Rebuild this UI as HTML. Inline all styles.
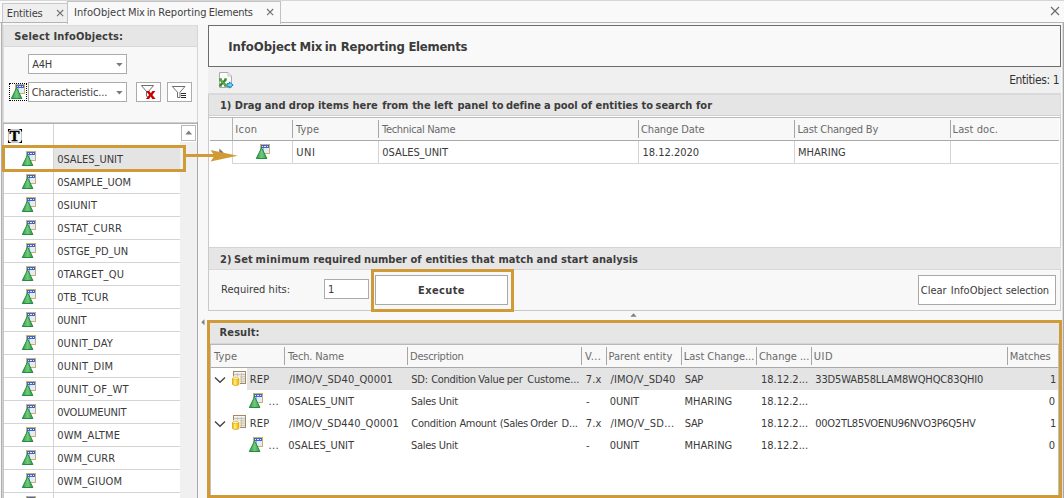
<!DOCTYPE html>
<html lang="en"><head><meta charset="utf-8"><title>InfoObject Mix in Reporting Elements</title>
<style>
html,body{margin:0;padding:0}
html{overflow:hidden;width:1064px;height:498px}
body{width:1064px;height:498px;overflow:hidden;position:relative;background:#f8f8f8;font-family:"DejaVu Sans Condensed","DejaVu Sans","Liberation Sans",sans-serif;font-size:11px}
div,svg,span{position:absolute;box-sizing:content-box}
span{white-space:pre;line-height:20px;height:20px;display:block}
svg{overflow:visible}
#app{left:0;top:0;width:1064px;height:498px;overflow:hidden}
</style></head><body><div id="app">
<div style="left:0px;top:0px;width:1064px;height:23px;background:#f9f9f9;"></div>
<div style="left:0px;top:0px;width:1064px;height:1px;background:#d6d6d6;"></div>
<div style="left:0px;top:22px;width:1064px;height:1px;background:#b4b4b4;"></div>
<div style="left:2px;top:3px;width:65px;height:18px;background:#efefef;border:1px solid #c8c8c8;border-bottom:none;"></div>
<div style="left:67px;top:1px;width:212px;height:22px;background:#f9f9f9;border:1px solid #c2c2c2;border-bottom:none;"></div>
<svg style="left:55.9px;top:9.0px" width="8.2" height="8.2"><path d="M1 1L7.2 7.2M7.2 1L1 7.2" stroke="#707070" stroke-width="1.1" fill="none"/></svg>
<svg style="left:265.9px;top:7.9px" width="8.2" height="8.2"><path d="M1 1L7.2 7.2M7.2 1L1 7.2" stroke="#707070" stroke-width="1.1" fill="none"/></svg>
<svg style="left:1050px;top:6px" width="10" height="10"><path d="M1 1L9 9M9 1L1 9" stroke="#686868" stroke-width="1.1" fill="none"/></svg>
<div style="left:1062px;top:23px;width:1px;height:475px;background:#dedede;"></div>
<div style="left:1063px;top:23px;width:1px;height:475px;background:#a8a8a8;"></div>
<div style="left:1px;top:23px;width:1px;height:475px;background:#b0b0b0;"></div>
<div style="left:2px;top:23px;width:1px;height:475px;background:#d2d2d2;"></div>
<div style="left:3px;top:25px;width:193px;height:473px;background:#f8f8f8;border:1px solid #dcdcdc;border-bottom:none;border-right-color:#d6d6d6;"></div>
<div style="left:4px;top:26px;width:193px;height:20px;background:#e6e6e6;"></div>
<div style="left:4px;top:46px;width:193px;height:1px;background:#d8d8d8;"></div>
<div style="left:28px;top:54px;width:97px;height:18px;background:#ffffff;border:1px solid #ababab;"></div>
<svg style="left:115.8px;top:62.8px" width="8" height="5"><path d="M0.2 0H6.6L3.4 3.5Z" fill="#7a7a7a"/></svg>
<div style="left:28px;top:82px;width:97px;height:18px;background:#ffffff;border:1px solid #ababab;"></div>
<svg style="left:115.8px;top:90.8px" width="8" height="5"><path d="M0.2 0H6.6L3.4 3.5Z" fill="#7a7a7a"/></svg>
<div style="left:9px;top:83px;width:16px;height:16px;background:#ffffff;border:1px dotted #000;"></div>
<svg style="left:11px;top:84px" width="15" height="16" viewBox="0 0 15 16">
<defs><linearGradient id="g1" x1="0" x2="1" y1="0" y2="0"><stop offset="0" stop-color="#2f9a4c"/><stop offset="0.5" stop-color="#74c878"/><stop offset="1" stop-color="#2f9a4c"/></linearGradient></defs>
<rect x="4.5" y="0.5" width="9" height="9" fill="#ffffff" stroke="#c9b06c"/>
<rect x="5" y="1" width="8" height="3" fill="#3f66cf"/>
<rect x="6" y="2" width="1" height="1" fill="#dfe8ff"/><rect x="8" y="2" width="2" height="1" fill="#dfe8ff"/><rect x="11" y="2" width="1" height="1" fill="#dfe8ff"/>
<rect x="7" y="4" width="6" height="5" fill="#e4ebf8"/><rect x="7" y="4" width="1" height="5" fill="#9db4e4"/>
<path d="M5.6 3.8L10.9 14.5H0.3Z" fill="url(#g1)" stroke="#128438" stroke-width="0.9" stroke-linejoin="round"/>
</svg>
<div style="left:136px;top:82px;width:23px;height:18px;background:#ffffff;border:1px solid #ababab;"></div>
<div style="left:167px;top:82px;width:23px;height:18px;background:#ffffff;border:1px solid #ababab;"></div>
<svg style="left:136px;top:82px" width="25" height="20"><path d="M5.4 3.5H17.6L12.6 9.3M10.4 9.3L5.4 3.5M10.5 9V14.2L12 15" fill="none" stroke="#6e6e6e" stroke-width="1"/><path d="M10 9H13.3L14.8 11.3L16.3 9H19.4L16.4 13L19.6 17H16.3L14.7 14.6L13.1 17H9.9L13.1 13Z" fill="#cc0000"/></svg>
<svg style="left:167px;top:82px" width="25" height="20"><path d="M5.3 4.5H18L13 10.2V15.5H10.5V10.2Z" fill="#fff" stroke="#6e6e6e" stroke-width="1"/><path d="M14 11.5H19M14 13.5H19M14 15.5H19" stroke="#2a2a2a" stroke-width="1"/></svg>
<div style="left:3px;top:122px;width:195px;height:1px;background:#cfcfcf;"></div>
<div style="left:3px;top:123px;width:195px;height:1px;background:#b0b0b0;"></div>
<div style="left:197px;top:122px;width:1px;height:376px;background:#a9a9a9;"></div>
<div style="left:4px;top:124px;width:193px;height:374px;background:#ffffff;"></div>
<div style="left:180px;top:142px;width:17px;height:356px;background:#f0f0f0;"></div>
<div style="left:53px;top:124px;width:1px;height:374px;background:#d4d4d4;"></div>
<div style="left:3px;top:124px;width:1px;height:374px;background:#c6c6c6;"></div>
<div style="left:8px;top:129px;width:12px;height:12px;background:#f4f4f4;border:1px solid #c8c8c8;border-radius:2px;"></div>
<svg style="left:8px;top:129px" width="14" height="14"><path d="M0.5 2.5V0.5H2.5M11.5 0.5H13.5V2.5M13.5 11.5V13.5H11.5M2.5 13.5H0.5V11.5" stroke="#000" fill="none" stroke-width="1.1"/></svg>
<div style="left:181px;top:125px;width:13px;height:14px;background:#ffffff;border:1px solid #b8b8b8;"></div>
<svg style="left:185px;top:129.6px" width="8" height="5"><path d="M0.3 4.4H7.1L3.7 0.5Z" fill="#808080"/></svg>
<div style="left:54px;top:147px;width:126px;height:23px;background:#e4e4e4;"></div>
<div style="left:4px;top:170px;width:176px;height:1px;background:#d4d4d4;"></div>
<svg style="left:22px;top:151px" width="15" height="16" viewBox="0 0 15 16">
<defs><linearGradient id="g2" x1="0" x2="1" y1="0" y2="0"><stop offset="0" stop-color="#2f9a4c"/><stop offset="0.5" stop-color="#74c878"/><stop offset="1" stop-color="#2f9a4c"/></linearGradient></defs>
<rect x="4.5" y="0.5" width="9" height="9" fill="#ffffff" stroke="#c9b06c"/>
<rect x="5" y="1" width="8" height="3" fill="#3f66cf"/>
<rect x="6" y="2" width="1" height="1" fill="#dfe8ff"/><rect x="8" y="2" width="2" height="1" fill="#dfe8ff"/><rect x="11" y="2" width="1" height="1" fill="#dfe8ff"/>
<rect x="7" y="4" width="6" height="5" fill="#e4ebf8"/><rect x="7" y="4" width="1" height="5" fill="#9db4e4"/>
<path d="M5.6 3.8L10.9 14.5H0.3Z" fill="url(#g2)" stroke="#128438" stroke-width="0.9" stroke-linejoin="round"/>
</svg>
<div style="left:4px;top:193px;width:176px;height:1px;background:#d4d4d4;"></div>
<svg style="left:22px;top:174px" width="15" height="16" viewBox="0 0 15 16">
<defs><linearGradient id="g3" x1="0" x2="1" y1="0" y2="0"><stop offset="0" stop-color="#2f9a4c"/><stop offset="0.5" stop-color="#74c878"/><stop offset="1" stop-color="#2f9a4c"/></linearGradient></defs>
<rect x="4.5" y="0.5" width="9" height="9" fill="#ffffff" stroke="#c9b06c"/>
<rect x="5" y="1" width="8" height="3" fill="#3f66cf"/>
<rect x="6" y="2" width="1" height="1" fill="#dfe8ff"/><rect x="8" y="2" width="2" height="1" fill="#dfe8ff"/><rect x="11" y="2" width="1" height="1" fill="#dfe8ff"/>
<rect x="7" y="4" width="6" height="5" fill="#e4ebf8"/><rect x="7" y="4" width="1" height="5" fill="#9db4e4"/>
<path d="M5.6 3.8L10.9 14.5H0.3Z" fill="url(#g3)" stroke="#128438" stroke-width="0.9" stroke-linejoin="round"/>
</svg>
<div style="left:4px;top:216px;width:176px;height:1px;background:#d4d4d4;"></div>
<svg style="left:22px;top:197px" width="15" height="16" viewBox="0 0 15 16">
<defs><linearGradient id="g4" x1="0" x2="1" y1="0" y2="0"><stop offset="0" stop-color="#2f9a4c"/><stop offset="0.5" stop-color="#74c878"/><stop offset="1" stop-color="#2f9a4c"/></linearGradient></defs>
<rect x="4.5" y="0.5" width="9" height="9" fill="#ffffff" stroke="#c9b06c"/>
<rect x="5" y="1" width="8" height="3" fill="#3f66cf"/>
<rect x="6" y="2" width="1" height="1" fill="#dfe8ff"/><rect x="8" y="2" width="2" height="1" fill="#dfe8ff"/><rect x="11" y="2" width="1" height="1" fill="#dfe8ff"/>
<rect x="7" y="4" width="6" height="5" fill="#e4ebf8"/><rect x="7" y="4" width="1" height="5" fill="#9db4e4"/>
<path d="M5.6 3.8L10.9 14.5H0.3Z" fill="url(#g4)" stroke="#128438" stroke-width="0.9" stroke-linejoin="round"/>
</svg>
<div style="left:4px;top:239px;width:176px;height:1px;background:#d4d4d4;"></div>
<svg style="left:22px;top:220px" width="15" height="16" viewBox="0 0 15 16">
<defs><linearGradient id="g5" x1="0" x2="1" y1="0" y2="0"><stop offset="0" stop-color="#2f9a4c"/><stop offset="0.5" stop-color="#74c878"/><stop offset="1" stop-color="#2f9a4c"/></linearGradient></defs>
<rect x="4.5" y="0.5" width="9" height="9" fill="#ffffff" stroke="#c9b06c"/>
<rect x="5" y="1" width="8" height="3" fill="#3f66cf"/>
<rect x="6" y="2" width="1" height="1" fill="#dfe8ff"/><rect x="8" y="2" width="2" height="1" fill="#dfe8ff"/><rect x="11" y="2" width="1" height="1" fill="#dfe8ff"/>
<rect x="7" y="4" width="6" height="5" fill="#e4ebf8"/><rect x="7" y="4" width="1" height="5" fill="#9db4e4"/>
<path d="M5.6 3.8L10.9 14.5H0.3Z" fill="url(#g5)" stroke="#128438" stroke-width="0.9" stroke-linejoin="round"/>
</svg>
<div style="left:4px;top:262px;width:176px;height:1px;background:#d4d4d4;"></div>
<svg style="left:22px;top:243px" width="15" height="16" viewBox="0 0 15 16">
<defs><linearGradient id="g6" x1="0" x2="1" y1="0" y2="0"><stop offset="0" stop-color="#2f9a4c"/><stop offset="0.5" stop-color="#74c878"/><stop offset="1" stop-color="#2f9a4c"/></linearGradient></defs>
<rect x="4.5" y="0.5" width="9" height="9" fill="#ffffff" stroke="#c9b06c"/>
<rect x="5" y="1" width="8" height="3" fill="#3f66cf"/>
<rect x="6" y="2" width="1" height="1" fill="#dfe8ff"/><rect x="8" y="2" width="2" height="1" fill="#dfe8ff"/><rect x="11" y="2" width="1" height="1" fill="#dfe8ff"/>
<rect x="7" y="4" width="6" height="5" fill="#e4ebf8"/><rect x="7" y="4" width="1" height="5" fill="#9db4e4"/>
<path d="M5.6 3.8L10.9 14.5H0.3Z" fill="url(#g6)" stroke="#128438" stroke-width="0.9" stroke-linejoin="round"/>
</svg>
<div style="left:4px;top:285px;width:176px;height:1px;background:#d4d4d4;"></div>
<svg style="left:22px;top:266px" width="15" height="16" viewBox="0 0 15 16">
<defs><linearGradient id="g7" x1="0" x2="1" y1="0" y2="0"><stop offset="0" stop-color="#2f9a4c"/><stop offset="0.5" stop-color="#74c878"/><stop offset="1" stop-color="#2f9a4c"/></linearGradient></defs>
<rect x="4.5" y="0.5" width="9" height="9" fill="#ffffff" stroke="#c9b06c"/>
<rect x="5" y="1" width="8" height="3" fill="#3f66cf"/>
<rect x="6" y="2" width="1" height="1" fill="#dfe8ff"/><rect x="8" y="2" width="2" height="1" fill="#dfe8ff"/><rect x="11" y="2" width="1" height="1" fill="#dfe8ff"/>
<rect x="7" y="4" width="6" height="5" fill="#e4ebf8"/><rect x="7" y="4" width="1" height="5" fill="#9db4e4"/>
<path d="M5.6 3.8L10.9 14.5H0.3Z" fill="url(#g7)" stroke="#128438" stroke-width="0.9" stroke-linejoin="round"/>
</svg>
<div style="left:4px;top:308px;width:176px;height:1px;background:#d4d4d4;"></div>
<svg style="left:22px;top:289px" width="15" height="16" viewBox="0 0 15 16">
<defs><linearGradient id="g8" x1="0" x2="1" y1="0" y2="0"><stop offset="0" stop-color="#2f9a4c"/><stop offset="0.5" stop-color="#74c878"/><stop offset="1" stop-color="#2f9a4c"/></linearGradient></defs>
<rect x="4.5" y="0.5" width="9" height="9" fill="#ffffff" stroke="#c9b06c"/>
<rect x="5" y="1" width="8" height="3" fill="#3f66cf"/>
<rect x="6" y="2" width="1" height="1" fill="#dfe8ff"/><rect x="8" y="2" width="2" height="1" fill="#dfe8ff"/><rect x="11" y="2" width="1" height="1" fill="#dfe8ff"/>
<rect x="7" y="4" width="6" height="5" fill="#e4ebf8"/><rect x="7" y="4" width="1" height="5" fill="#9db4e4"/>
<path d="M5.6 3.8L10.9 14.5H0.3Z" fill="url(#g8)" stroke="#128438" stroke-width="0.9" stroke-linejoin="round"/>
</svg>
<div style="left:4px;top:331px;width:176px;height:1px;background:#d4d4d4;"></div>
<svg style="left:22px;top:312px" width="15" height="16" viewBox="0 0 15 16">
<defs><linearGradient id="g9" x1="0" x2="1" y1="0" y2="0"><stop offset="0" stop-color="#2f9a4c"/><stop offset="0.5" stop-color="#74c878"/><stop offset="1" stop-color="#2f9a4c"/></linearGradient></defs>
<rect x="4.5" y="0.5" width="9" height="9" fill="#ffffff" stroke="#c9b06c"/>
<rect x="5" y="1" width="8" height="3" fill="#3f66cf"/>
<rect x="6" y="2" width="1" height="1" fill="#dfe8ff"/><rect x="8" y="2" width="2" height="1" fill="#dfe8ff"/><rect x="11" y="2" width="1" height="1" fill="#dfe8ff"/>
<rect x="7" y="4" width="6" height="5" fill="#e4ebf8"/><rect x="7" y="4" width="1" height="5" fill="#9db4e4"/>
<path d="M5.6 3.8L10.9 14.5H0.3Z" fill="url(#g9)" stroke="#128438" stroke-width="0.9" stroke-linejoin="round"/>
</svg>
<div style="left:4px;top:354px;width:176px;height:1px;background:#d4d4d4;"></div>
<svg style="left:22px;top:335px" width="15" height="16" viewBox="0 0 15 16">
<defs><linearGradient id="g10" x1="0" x2="1" y1="0" y2="0"><stop offset="0" stop-color="#2f9a4c"/><stop offset="0.5" stop-color="#74c878"/><stop offset="1" stop-color="#2f9a4c"/></linearGradient></defs>
<rect x="4.5" y="0.5" width="9" height="9" fill="#ffffff" stroke="#c9b06c"/>
<rect x="5" y="1" width="8" height="3" fill="#3f66cf"/>
<rect x="6" y="2" width="1" height="1" fill="#dfe8ff"/><rect x="8" y="2" width="2" height="1" fill="#dfe8ff"/><rect x="11" y="2" width="1" height="1" fill="#dfe8ff"/>
<rect x="7" y="4" width="6" height="5" fill="#e4ebf8"/><rect x="7" y="4" width="1" height="5" fill="#9db4e4"/>
<path d="M5.6 3.8L10.9 14.5H0.3Z" fill="url(#g10)" stroke="#128438" stroke-width="0.9" stroke-linejoin="round"/>
</svg>
<div style="left:4px;top:377px;width:176px;height:1px;background:#d4d4d4;"></div>
<svg style="left:22px;top:358px" width="15" height="16" viewBox="0 0 15 16">
<defs><linearGradient id="g11" x1="0" x2="1" y1="0" y2="0"><stop offset="0" stop-color="#2f9a4c"/><stop offset="0.5" stop-color="#74c878"/><stop offset="1" stop-color="#2f9a4c"/></linearGradient></defs>
<rect x="4.5" y="0.5" width="9" height="9" fill="#ffffff" stroke="#c9b06c"/>
<rect x="5" y="1" width="8" height="3" fill="#3f66cf"/>
<rect x="6" y="2" width="1" height="1" fill="#dfe8ff"/><rect x="8" y="2" width="2" height="1" fill="#dfe8ff"/><rect x="11" y="2" width="1" height="1" fill="#dfe8ff"/>
<rect x="7" y="4" width="6" height="5" fill="#e4ebf8"/><rect x="7" y="4" width="1" height="5" fill="#9db4e4"/>
<path d="M5.6 3.8L10.9 14.5H0.3Z" fill="url(#g11)" stroke="#128438" stroke-width="0.9" stroke-linejoin="round"/>
</svg>
<div style="left:4px;top:400px;width:176px;height:1px;background:#d4d4d4;"></div>
<svg style="left:22px;top:381px" width="15" height="16" viewBox="0 0 15 16">
<defs><linearGradient id="g12" x1="0" x2="1" y1="0" y2="0"><stop offset="0" stop-color="#2f9a4c"/><stop offset="0.5" stop-color="#74c878"/><stop offset="1" stop-color="#2f9a4c"/></linearGradient></defs>
<rect x="4.5" y="0.5" width="9" height="9" fill="#ffffff" stroke="#c9b06c"/>
<rect x="5" y="1" width="8" height="3" fill="#3f66cf"/>
<rect x="6" y="2" width="1" height="1" fill="#dfe8ff"/><rect x="8" y="2" width="2" height="1" fill="#dfe8ff"/><rect x="11" y="2" width="1" height="1" fill="#dfe8ff"/>
<rect x="7" y="4" width="6" height="5" fill="#e4ebf8"/><rect x="7" y="4" width="1" height="5" fill="#9db4e4"/>
<path d="M5.6 3.8L10.9 14.5H0.3Z" fill="url(#g12)" stroke="#128438" stroke-width="0.9" stroke-linejoin="round"/>
</svg>
<div style="left:4px;top:423px;width:176px;height:1px;background:#d4d4d4;"></div>
<svg style="left:22px;top:404px" width="15" height="16" viewBox="0 0 15 16">
<defs><linearGradient id="g13" x1="0" x2="1" y1="0" y2="0"><stop offset="0" stop-color="#2f9a4c"/><stop offset="0.5" stop-color="#74c878"/><stop offset="1" stop-color="#2f9a4c"/></linearGradient></defs>
<rect x="4.5" y="0.5" width="9" height="9" fill="#ffffff" stroke="#c9b06c"/>
<rect x="5" y="1" width="8" height="3" fill="#3f66cf"/>
<rect x="6" y="2" width="1" height="1" fill="#dfe8ff"/><rect x="8" y="2" width="2" height="1" fill="#dfe8ff"/><rect x="11" y="2" width="1" height="1" fill="#dfe8ff"/>
<rect x="7" y="4" width="6" height="5" fill="#e4ebf8"/><rect x="7" y="4" width="1" height="5" fill="#9db4e4"/>
<path d="M5.6 3.8L10.9 14.5H0.3Z" fill="url(#g13)" stroke="#128438" stroke-width="0.9" stroke-linejoin="round"/>
</svg>
<div style="left:4px;top:446px;width:176px;height:1px;background:#d4d4d4;"></div>
<svg style="left:22px;top:427px" width="15" height="16" viewBox="0 0 15 16">
<defs><linearGradient id="g14" x1="0" x2="1" y1="0" y2="0"><stop offset="0" stop-color="#2f9a4c"/><stop offset="0.5" stop-color="#74c878"/><stop offset="1" stop-color="#2f9a4c"/></linearGradient></defs>
<rect x="4.5" y="0.5" width="9" height="9" fill="#ffffff" stroke="#c9b06c"/>
<rect x="5" y="1" width="8" height="3" fill="#3f66cf"/>
<rect x="6" y="2" width="1" height="1" fill="#dfe8ff"/><rect x="8" y="2" width="2" height="1" fill="#dfe8ff"/><rect x="11" y="2" width="1" height="1" fill="#dfe8ff"/>
<rect x="7" y="4" width="6" height="5" fill="#e4ebf8"/><rect x="7" y="4" width="1" height="5" fill="#9db4e4"/>
<path d="M5.6 3.8L10.9 14.5H0.3Z" fill="url(#g14)" stroke="#128438" stroke-width="0.9" stroke-linejoin="round"/>
</svg>
<div style="left:4px;top:469px;width:176px;height:1px;background:#d4d4d4;"></div>
<svg style="left:22px;top:450px" width="15" height="16" viewBox="0 0 15 16">
<defs><linearGradient id="g15" x1="0" x2="1" y1="0" y2="0"><stop offset="0" stop-color="#2f9a4c"/><stop offset="0.5" stop-color="#74c878"/><stop offset="1" stop-color="#2f9a4c"/></linearGradient></defs>
<rect x="4.5" y="0.5" width="9" height="9" fill="#ffffff" stroke="#c9b06c"/>
<rect x="5" y="1" width="8" height="3" fill="#3f66cf"/>
<rect x="6" y="2" width="1" height="1" fill="#dfe8ff"/><rect x="8" y="2" width="2" height="1" fill="#dfe8ff"/><rect x="11" y="2" width="1" height="1" fill="#dfe8ff"/>
<rect x="7" y="4" width="6" height="5" fill="#e4ebf8"/><rect x="7" y="4" width="1" height="5" fill="#9db4e4"/>
<path d="M5.6 3.8L10.9 14.5H0.3Z" fill="url(#g15)" stroke="#128438" stroke-width="0.9" stroke-linejoin="round"/>
</svg>
<div style="left:4px;top:492px;width:176px;height:1px;background:#d4d4d4;"></div>
<svg style="left:22px;top:473px" width="15" height="16" viewBox="0 0 15 16">
<defs><linearGradient id="g16" x1="0" x2="1" y1="0" y2="0"><stop offset="0" stop-color="#2f9a4c"/><stop offset="0.5" stop-color="#74c878"/><stop offset="1" stop-color="#2f9a4c"/></linearGradient></defs>
<rect x="4.5" y="0.5" width="9" height="9" fill="#ffffff" stroke="#c9b06c"/>
<rect x="5" y="1" width="8" height="3" fill="#3f66cf"/>
<rect x="6" y="2" width="1" height="1" fill="#dfe8ff"/><rect x="8" y="2" width="2" height="1" fill="#dfe8ff"/><rect x="11" y="2" width="1" height="1" fill="#dfe8ff"/>
<rect x="7" y="4" width="6" height="5" fill="#e4ebf8"/><rect x="7" y="4" width="1" height="5" fill="#9db4e4"/>
<path d="M5.6 3.8L10.9 14.5H0.3Z" fill="url(#g16)" stroke="#128438" stroke-width="0.9" stroke-linejoin="round"/>
</svg>
<div style="left:4px;top:515px;width:176px;height:1px;background:#d4d4d4;"></div>
<svg style="left:22px;top:496px" width="15" height="16" viewBox="0 0 15 16">
<defs><linearGradient id="g17" x1="0" x2="1" y1="0" y2="0"><stop offset="0" stop-color="#2f9a4c"/><stop offset="0.5" stop-color="#74c878"/><stop offset="1" stop-color="#2f9a4c"/></linearGradient></defs>
<rect x="4.5" y="0.5" width="9" height="9" fill="#ffffff" stroke="#c9b06c"/>
<rect x="5" y="1" width="8" height="3" fill="#3f66cf"/>
<rect x="6" y="2" width="1" height="1" fill="#dfe8ff"/><rect x="8" y="2" width="2" height="1" fill="#dfe8ff"/><rect x="11" y="2" width="1" height="1" fill="#dfe8ff"/>
<rect x="7" y="4" width="6" height="5" fill="#e4ebf8"/><rect x="7" y="4" width="1" height="5" fill="#9db4e4"/>
<path d="M5.6 3.8L10.9 14.5H0.3Z" fill="url(#g17)" stroke="#128438" stroke-width="0.9" stroke-linejoin="round"/>
</svg>
<div style="left:2px;top:145px;width:178px;height:21px;border:3px solid #d09b37;"></div>
<div style="left:208px;top:25px;width:851px;height:40px;background:#f9f9f9;border:1px solid #6c6c6c;"></div>
<div style="left:208px;top:67px;width:853px;height:26px;background:#f0f0f0;"></div>
<svg style="left:218px;top:71px" width="17" height="18" viewBox="0 0 17 18">
<path d="M1.5 1.5H10L13.5 5V16.5H1.5Z" fill="#fbfbfb" stroke="#ababab"/>
<path d="M10 1.5V5H13.5" fill="#f2f2f2" stroke="#c4c4c4"/>
<path d="M1 8H4M6 8H9M1 15H4M6 15H9" stroke="#2f8a1c" stroke-width="1.2"/>
<path d="M1.8 8.2L8.2 14.8M8.2 8.2L1.8 14.8" stroke="#2f8a1c" stroke-width="2.3"/>
<path d="M2 8.4L8 14.6" stroke="#a8e08c" stroke-width="0.7"/>
<path d="M9 12.6H11.4V11L15.2 14L11.4 17V15.4H9Z" fill="#62d8f4" stroke="#1a7cb0" stroke-width="0.9" stroke-linejoin="round"/>
</svg>
<div style="left:208px;top:93px;width:853px;height:2px;background:#d9d9d9;"></div>
<div style="left:208px;top:95px;width:853px;height:20px;background:#e5e5e5;"></div>
<div style="left:1060px;top:95px;width:1px;height:20px;background:#dadada;"></div>
<div style="left:208px;top:115px;width:853px;height:1px;background:#d0d0d0;"></div>
<div style="left:208px;top:95px;width:1px;height:216px;background:#cacaca;"></div>
<div style="left:209px;top:116px;width:851px;height:132px;background:#ffffff;"></div>
<div style="left:1060px;top:116px;width:1px;height:132px;background:#d0d0d0;"></div>
<div style="left:209px;top:117px;width:851px;height:1px;background:#b9b9b9;"></div>
<div style="left:210px;top:118px;width:849px;height:22px;background:#f8f8f8;"></div>
<div style="left:210px;top:140px;width:849px;height:1px;background:#a9a9a9;"></div>
<div style="left:232px;top:163px;width:827px;height:1px;background:#d4d4d4;"></div>
<div style="left:232px;top:118px;width:1px;height:22px;background:#b4b4b4;"></div>
<div style="left:232px;top:141px;width:1px;height:22px;background:#d4d4d4;"></div>
<div style="left:292px;top:120px;width:1px;height:18px;background:#a6a6a6;"></div>
<div style="left:292px;top:141px;width:1px;height:22px;background:#d4d4d4;"></div>
<div style="left:378px;top:120px;width:1px;height:18px;background:#a6a6a6;"></div>
<div style="left:378px;top:141px;width:1px;height:22px;background:#d4d4d4;"></div>
<div style="left:638px;top:120px;width:1px;height:18px;background:#a6a6a6;"></div>
<div style="left:638px;top:141px;width:1px;height:22px;background:#d4d4d4;"></div>
<div style="left:794px;top:120px;width:1px;height:18px;background:#a6a6a6;"></div>
<div style="left:794px;top:141px;width:1px;height:22px;background:#d4d4d4;"></div>
<div style="left:950px;top:120px;width:1px;height:18px;background:#a6a6a6;"></div>
<div style="left:950px;top:141px;width:1px;height:22px;background:#d4d4d4;"></div>
<svg style="left:219px;top:147.5px" width="6" height="9"><path d="M0.3 0.5L4.5 4.5L0.3 8.5Z" fill="#777"/></svg>
<svg style="left:256px;top:144px" width="15" height="16" viewBox="0 0 15 16">
<defs><linearGradient id="g18" x1="0" x2="1" y1="0" y2="0"><stop offset="0" stop-color="#2f9a4c"/><stop offset="0.5" stop-color="#74c878"/><stop offset="1" stop-color="#2f9a4c"/></linearGradient></defs>
<rect x="4.5" y="0.5" width="9" height="9" fill="#ffffff" stroke="#c9b06c"/>
<rect x="5" y="1" width="8" height="3" fill="#3f66cf"/>
<rect x="6" y="2" width="1" height="1" fill="#dfe8ff"/><rect x="8" y="2" width="2" height="1" fill="#dfe8ff"/><rect x="11" y="2" width="1" height="1" fill="#dfe8ff"/>
<rect x="7" y="4" width="6" height="5" fill="#e4ebf8"/><rect x="7" y="4" width="1" height="5" fill="#9db4e4"/>
<path d="M5.6 3.8L10.9 14.5H0.3Z" fill="url(#g18)" stroke="#128438" stroke-width="0.9" stroke-linejoin="round"/>
</svg>
<div style="left:209px;top:247px;width:852px;height:1px;background:#d4d4d4;"></div>
<div style="left:209px;top:248px;width:852px;height:21px;background:#e6e6e6;"></div>
<div style="left:209px;top:269px;width:852px;height:1px;background:#d8d8d8;"></div>
<div style="left:209px;top:310px;width:852px;height:1px;background:#c8c8c8;"></div>
<div style="left:1060px;top:270px;width:1px;height:40px;background:#d0d0d0;"></div>
<div style="left:324px;top:279px;width:43px;height:18px;background:#ffffff;border:1px solid #ababab;"></div>
<div style="left:375px;top:275px;width:131px;height:28px;background:#ffffff;border:1px solid #a8a8a8;"></div>
<div style="left:371px;top:269px;width:137px;height:37px;border:3px solid #d09b37;"></div>
<div style="left:918px;top:275px;width:136px;height:28px;background:#ffffff;border:1px solid #a8a8a8;"></div>
<svg style="left:201px;top:319px" width="4" height="7"><path d="M3.5 0.3V6.3L0.3 3.3Z" fill="#808080"/></svg>
<svg style="left:630px;top:313px" width="7" height="4"><path d="M0.3 3.7H6.7L3.5 0.3Z" fill="#808080"/></svg>
<div style="left:210px;top:323px;width:849px;height:20px;background:#e6e6e6;"></div>
<div style="left:210px;top:343px;width:849px;height:1px;background:#d6d6d6;"></div>
<div style="left:210px;top:344px;width:849px;height:1px;background:#b9b9b9;"></div>
<div style="left:210px;top:345px;width:848px;height:150px;background:#ffffff;"></div>
<div style="left:210px;top:345px;width:1px;height:150px;background:#c0c0c0;"></div>
<div style="left:1058px;top:345px;width:1px;height:150px;background:#c0c0c0;"></div>
<div style="left:211px;top:345px;width:847px;height:22px;background:#f8f8f8;"></div>
<div style="left:211px;top:367px;width:847px;height:1px;background:#a9a9a9;"></div>
<div style="left:247px;top:368px;width:811px;height:22px;background:#e4e4e4;"></div>
<div style="left:284px;top:347px;width:1px;height:18px;background:#a6a6a6;"></div>
<div style="left:407px;top:347px;width:1px;height:18px;background:#a6a6a6;"></div>
<div style="left:581px;top:347px;width:1px;height:18px;background:#a6a6a6;"></div>
<div style="left:606px;top:347px;width:1px;height:18px;background:#a6a6a6;"></div>
<div style="left:681px;top:347px;width:1px;height:18px;background:#a6a6a6;"></div>
<div style="left:756px;top:347px;width:1px;height:18px;background:#a6a6a6;"></div>
<div style="left:811px;top:347px;width:1px;height:18px;background:#a6a6a6;"></div>
<div style="left:1007px;top:347px;width:1px;height:18px;background:#a6a6a6;"></div>
<svg style="left:214px;top:376px" width="12" height="8"><path d="M1 1.5L6 6.2L11 1.5" stroke="#444" stroke-width="1.4" fill="none"/></svg>
<svg style="left:232px;top:370px" width="15" height="17" viewBox="0 0 15 17">
<defs><linearGradient id="c19" x1="0" x2="1" y1="0" y2="0"><stop offset="0" stop-color="#f2b705"/><stop offset="0.35" stop-color="#fff27a"/><stop offset="1" stop-color="#f0b400"/></linearGradient></defs>
<rect x="1.5" y="1.5" width="12" height="12" fill="#dcecfc" stroke="#a8895a"/>
<path d="M2 4.5H13M2 6.8H13M2 9.1H13M2 11.4H13M5.5 2V13M9.5 2V13" stroke="#d2bf9a" stroke-width="0.9"/>
<path d="M2 2.6H13" stroke="#f4f8ff" stroke-width="1"/>
<path d="M-0.2 6.4H8V14H-0.2Z" fill="#ffffff"/>
<path d="M0.6 8.5V14.3C0.6 15.8 6.8 15.8 6.8 14.3V8.5C6.8 7 0.6 7 0.6 8.5Z" fill="url(#c19)" stroke="#d9a21b" stroke-width="0.9"/>
<path d="M0.8 8.7C0.8 10 6.6 10 6.6 8.7" fill="none" stroke="#e0aa20" stroke-width="0.7"/>
<ellipse cx="3.7" cy="8.4" rx="2.6" ry="0.8" fill="#fff6b0"/>
</svg>
<svg style="left:249px;top:393px" width="15" height="16" viewBox="0 0 15 16">
<defs><linearGradient id="g20" x1="0" x2="1" y1="0" y2="0"><stop offset="0" stop-color="#2f9a4c"/><stop offset="0.5" stop-color="#74c878"/><stop offset="1" stop-color="#2f9a4c"/></linearGradient></defs>
<rect x="4.5" y="0.5" width="9" height="9" fill="#ffffff" stroke="#c9b06c"/>
<rect x="5" y="1" width="8" height="3" fill="#3f66cf"/>
<rect x="6" y="2" width="1" height="1" fill="#dfe8ff"/><rect x="8" y="2" width="2" height="1" fill="#dfe8ff"/><rect x="11" y="2" width="1" height="1" fill="#dfe8ff"/>
<rect x="7" y="4" width="6" height="5" fill="#e4ebf8"/><rect x="7" y="4" width="1" height="5" fill="#9db4e4"/>
<path d="M5.6 3.8L10.9 14.5H0.3Z" fill="url(#g20)" stroke="#128438" stroke-width="0.9" stroke-linejoin="round"/>
</svg>
<svg style="left:214px;top:420px" width="12" height="8"><path d="M1 1.5L6 6.2L11 1.5" stroke="#444" stroke-width="1.4" fill="none"/></svg>
<svg style="left:232px;top:414px" width="15" height="17" viewBox="0 0 15 17">
<defs><linearGradient id="c21" x1="0" x2="1" y1="0" y2="0"><stop offset="0" stop-color="#f2b705"/><stop offset="0.35" stop-color="#fff27a"/><stop offset="1" stop-color="#f0b400"/></linearGradient></defs>
<rect x="1.5" y="1.5" width="12" height="12" fill="#dcecfc" stroke="#a8895a"/>
<path d="M2 4.5H13M2 6.8H13M2 9.1H13M2 11.4H13M5.5 2V13M9.5 2V13" stroke="#d2bf9a" stroke-width="0.9"/>
<path d="M2 2.6H13" stroke="#f4f8ff" stroke-width="1"/>
<path d="M-0.2 6.4H8V14H-0.2Z" fill="#ffffff"/>
<path d="M0.6 8.5V14.3C0.6 15.8 6.8 15.8 6.8 14.3V8.5C6.8 7 0.6 7 0.6 8.5Z" fill="url(#c21)" stroke="#d9a21b" stroke-width="0.9"/>
<path d="M0.8 8.7C0.8 10 6.6 10 6.6 8.7" fill="none" stroke="#e0aa20" stroke-width="0.7"/>
<ellipse cx="3.7" cy="8.4" rx="2.6" ry="0.8" fill="#fff6b0"/>
</svg>
<svg style="left:249px;top:437px" width="15" height="16" viewBox="0 0 15 16">
<defs><linearGradient id="g22" x1="0" x2="1" y1="0" y2="0"><stop offset="0" stop-color="#2f9a4c"/><stop offset="0.5" stop-color="#74c878"/><stop offset="1" stop-color="#2f9a4c"/></linearGradient></defs>
<rect x="4.5" y="0.5" width="9" height="9" fill="#ffffff" stroke="#c9b06c"/>
<rect x="5" y="1" width="8" height="3" fill="#3f66cf"/>
<rect x="6" y="2" width="1" height="1" fill="#dfe8ff"/><rect x="8" y="2" width="2" height="1" fill="#dfe8ff"/><rect x="11" y="2" width="1" height="1" fill="#dfe8ff"/>
<rect x="7" y="4" width="6" height="5" fill="#e4ebf8"/><rect x="7" y="4" width="1" height="5" fill="#9db4e4"/>
<path d="M5.6 3.8L10.9 14.5H0.3Z" fill="url(#g22)" stroke="#128438" stroke-width="0.9" stroke-linejoin="round"/>
</svg>
<div style="left:207px;top:320px;width:849px;height:172px;border:3px solid #d09b37;"></div>
<svg style="left:186px;top:148.3px" width="54" height="16"><path d="M0 7.5H30" stroke="#d09b37" stroke-width="3"/><path d="M24.5 2L51.6 7.8L24.5 13.5L28.5 7.7Z" fill="#d09b37"/></svg>
<span style="left:6.85px;top:4.00px;font-size:11px;color:#404040;letter-spacing:-0.160px;">Entities</span>
<span style="left:74.05px;top:3.00px;font-size:11px;color:#404040;letter-spacing:0.069px;">InfoObject </span>
<span style="left:128.05px;top:3.00px;font-size:11px;color:#404040;letter-spacing:-0.142px;">Mix </span>
<span style="left:146.77px;top:3.00px;font-size:11px;color:#404040;letter-spacing:-0.142px;">in </span>
<span style="left:158.35px;top:3.00px;font-size:11px;color:#404040;letter-spacing:0.022px;">Reporting </span>
<span style="left:208.85px;top:3.00px;font-size:11px;color:#404040;letter-spacing:-0.289px;">Elements</span>
<span style="left:14.30px;top:27.00px;font-size:11px;color:#3c3c3c;font-weight:bold;letter-spacing:0.161px;">Select InfoObjects:</span>
<span style="left:32.20px;top:55.00px;font-size:11px;color:#3a3a3a;letter-spacing:-0.256px;">A4H</span>
<span style="left:31.70px;top:83.00px;font-size:11px;color:#3a3a3a;letter-spacing:-0.167px;">Characteristic...</span>
<span style="left:9.57px;top:126.00px;font-size:15px;color:#000;font-weight:bold;font-family:'Liberation Serif',serif;-webkit-text-stroke:0.45px #000;">T</span>
<span style="left:57.15px;top:150.00px;font-size:11px;color:#3a3a3a;letter-spacing:-0.036px;">0SALES_UNIT</span>
<span style="left:57.15px;top:173.00px;font-size:11px;color:#3a3a3a;letter-spacing:-0.045px;">0SAMPLE_UOM</span>
<span style="left:57.15px;top:196.00px;font-size:11px;color:#3a3a3a;letter-spacing:0.115px;">0SIUNIT</span>
<span style="left:57.15px;top:219.00px;font-size:11px;color:#3a3a3a;letter-spacing:0.250px;">0STAT_CURR</span>
<span style="left:57.15px;top:242.00px;font-size:11px;color:#3a3a3a;letter-spacing:0.043px;">0STGE_PD_UN</span>
<span style="left:57.15px;top:265.00px;font-size:11px;color:#3a3a3a;letter-spacing:0.192px;">0TARGET_QU</span>
<span style="left:57.15px;top:288.00px;font-size:11px;color:#3a3a3a;letter-spacing:0.132px;">0TB_TCUR</span>
<span style="left:57.15px;top:311.00px;font-size:11px;color:#3a3a3a;letter-spacing:-0.127px;">0UNIT</span>
<span style="left:57.15px;top:334.00px;font-size:11px;color:#3a3a3a;letter-spacing:0.183px;">0UNIT_DAY</span>
<span style="left:57.15px;top:357.00px;font-size:11px;color:#3a3a3a;letter-spacing:0.258px;">0UNIT_DIM</span>
<span style="left:57.15px;top:380.00px;font-size:11px;color:#3a3a3a;letter-spacing:0.219px;">0UNIT_OF_WT</span>
<span style="left:57.15px;top:403.00px;font-size:11px;color:#3a3a3a;letter-spacing:-0.197px;">0VOLUMEUNIT</span>
<span style="left:57.15px;top:426.00px;font-size:11px;color:#3a3a3a;letter-spacing:0.198px;">0WM_ALTME</span>
<span style="left:57.15px;top:449.00px;font-size:11px;color:#3a3a3a;letter-spacing:0.078px;">0WM_CURR</span>
<span style="left:57.15px;top:472.00px;font-size:11px;color:#3a3a3a;letter-spacing:0.145px;">0WM_GIUOM</span>
<span style="left:228.18px;top:37.00px;font-size:13px;color:#3c3c3c;font-weight:bold;letter-spacing:-0.050px;">InfoObject </span>
<span style="left:299.47px;top:37.00px;font-size:13px;color:#3c3c3c;font-weight:bold;letter-spacing:-0.213px;">Mix </span>
<span style="left:324.64px;top:37.00px;font-size:13px;color:#3c3c3c;font-weight:bold;letter-spacing:-0.213px;">in </span>
<span style="left:340.78px;top:37.00px;font-size:13px;color:#3c3c3c;font-weight:bold;letter-spacing:-0.168px;">Reporting </span>
<span style="left:408.38px;top:37.00px;font-size:13px;color:#3c3c3c;font-weight:bold;letter-spacing:-0.265px;">Elements</span>
<span style="left:1009.15px;top:70.00px;font-size:12px;color:#333;letter-spacing:-0.391px;">Entities: 1</span>
<span style="left:219.97px;top:96.00px;font-size:11px;color:#3c3c3c;font-weight:bold;letter-spacing:-0.017px;">1) </span>
<span style="left:234.79px;top:96.00px;font-size:11px;color:#3c3c3c;font-weight:bold;letter-spacing:-0.017px;">Drag </span>
<span style="left:264.71px;top:96.00px;font-size:11px;color:#3c3c3c;font-weight:bold;letter-spacing:-0.017px;">and </span>
<span style="left:288.82px;top:96.00px;font-size:11px;color:#3c3c3c;font-weight:bold;letter-spacing:-0.017px;">drop </span>
<span style="left:317.99px;top:96.00px;font-size:11px;color:#3c3c3c;font-weight:bold;letter-spacing:-0.017px;">items </span>
<span style="left:352.53px;top:96.00px;font-size:11px;color:#3c3c3c;font-weight:bold;letter-spacing:-0.017px;">here </span>
<span style="left:382.18px;top:96.00px;font-size:11px;color:#3c3c3c;font-weight:bold;letter-spacing:-0.017px;">from </span>
<span style="left:412.15px;top:96.00px;font-size:11px;color:#3c3c3c;font-weight:bold;letter-spacing:-0.017px;">the </span>
<span style="left:433.90px;top:96.00px;font-size:11px;color:#3c3c3c;font-weight:bold;letter-spacing:-0.017px;">left </span>
<span style="left:457.42px;top:96.00px;font-size:11px;color:#3c3c3c;font-weight:bold;letter-spacing:-0.017px;">panel </span>
<span style="left:491.94px;top:96.00px;font-size:11px;color:#3c3c3c;font-weight:bold;letter-spacing:-0.017px;">to </span>
<span style="left:505.90px;top:96.00px;font-size:11px;color:#3c3c3c;font-weight:bold;letter-spacing:-0.046px;">define </span>
<span style="left:543.93px;top:96.00px;font-size:11px;color:#3c3c3c;font-weight:bold;letter-spacing:-0.017px;">a </span>
<span style="left:553.73px;top:96.00px;font-size:11px;color:#3c3c3c;font-weight:bold;letter-spacing:-0.017px;">pool </span>
<span style="left:581.01px;top:96.00px;font-size:11px;color:#3c3c3c;font-weight:bold;letter-spacing:-0.017px;">of </span>
<span style="left:595.50px;top:96.00px;font-size:11px;color:#3c3c3c;font-weight:bold;letter-spacing:0.019px;">entities </span>
<span style="left:641.49px;top:96.00px;font-size:11px;color:#3c3c3c;font-weight:bold;letter-spacing:-0.017px;">to </span>
<span style="left:655.60px;top:96.00px;font-size:11px;color:#3c3c3c;font-weight:bold;letter-spacing:-0.066px;">search </span>
<span style="left:696.09px;top:96.00px;font-size:11px;color:#3c3c3c;font-weight:bold;letter-spacing:-0.017px;">for</span>
<span style="left:235.30px;top:120.00px;font-size:11px;color:#6a6a6a;letter-spacing:0.363px;">Icon</span>
<span style="left:296.05px;top:120.00px;font-size:11px;color:#6a6a6a;letter-spacing:0.127px;">Type</span>
<span style="left:382.05px;top:120.00px;font-size:11px;color:#6a6a6a;letter-spacing:-0.320px;">Technical Name</span>
<span style="left:640.95px;top:120.00px;font-size:11px;color:#6a6a6a;letter-spacing:-0.115px;">Change Date</span>
<span style="left:797.55px;top:120.00px;font-size:11px;color:#6a6a6a;letter-spacing:-0.215px;">Last Changed By</span>
<span style="left:952.55px;top:120.00px;font-size:11px;color:#6a6a6a;letter-spacing:0.071px;">Last doc.</span>
<span style="left:296.15px;top:143.00px;font-size:11px;color:#3a3a3a;letter-spacing:0.627px;">UNI</span>
<span style="left:382.35px;top:143.00px;font-size:11px;color:#3a3a3a;letter-spacing:-0.056px;">0SALES_UNIT</span>
<span style="left:642.45px;top:143.00px;font-size:11px;color:#3a3a3a;letter-spacing:0.006px;">18.12.2020</span>
<span style="left:798.05px;top:143.00px;font-size:11px;color:#3a3a3a;letter-spacing:0.018px;">MHARING</span>
<span style="left:220.11px;top:250.00px;font-size:11px;color:#3c3c3c;font-weight:bold;letter-spacing:0.043px;">2) </span>
<span style="left:234.01px;top:250.00px;font-size:11px;color:#3c3c3c;font-weight:bold;letter-spacing:0.043px;">Set </span>
<span style="left:255.45px;top:250.00px;font-size:11px;color:#3c3c3c;font-weight:bold;letter-spacing:0.393px;">minimum </span>
<span style="left:313.20px;top:250.00px;font-size:11px;color:#3c3c3c;font-weight:bold;letter-spacing:0.012px;">required </span>
<span style="left:364.00px;top:250.00px;font-size:11px;color:#3c3c3c;font-weight:bold;letter-spacing:-0.021px;">number </span>
<span style="left:410.43px;top:250.00px;font-size:11px;color:#3c3c3c;font-weight:bold;letter-spacing:0.043px;">of </span>
<span style="left:425.40px;top:250.00px;font-size:11px;color:#3c3c3c;font-weight:bold;letter-spacing:-0.010px;">entities </span>
<span style="left:471.28px;top:250.00px;font-size:11px;color:#3c3c3c;font-weight:bold;letter-spacing:0.043px;">that </span>
<span style="left:498.42px;top:250.00px;font-size:11px;color:#3c3c3c;font-weight:bold;letter-spacing:0.043px;">match </span>
<span style="left:536.60px;top:250.00px;font-size:11px;color:#3c3c3c;font-weight:bold;letter-spacing:0.043px;">and </span>
<span style="left:561.05px;top:250.00px;font-size:11px;color:#3c3c3c;font-weight:bold;letter-spacing:0.043px;">start </span>
<span style="left:592.30px;top:250.00px;font-size:11px;color:#3c3c3c;font-weight:bold;letter-spacing:0.033px;">analysis</span>
<span style="left:221.05px;top:280.00px;font-size:11px;color:#3a3a3a;letter-spacing:0.044px;">Required hits:</span>
<span style="left:327.95px;top:280.00px;font-size:11px;color:#3a3a3a;">1</span>
<span style="left:418.10px;top:281.00px;font-size:11px;color:#3c3c3c;font-weight:bold;letter-spacing:0.358px;">Execute</span>
<span style="left:920.85px;top:281.00px;font-size:11px;color:#3a3a3a;letter-spacing:-0.065px;">Clear </span>
<span style="left:950.75px;top:281.00px;font-size:11px;color:#3a3a3a;letter-spacing:0.047px;">InfoObject </span>
<span style="left:1005.80px;top:281.00px;font-size:11px;color:#3a3a3a;letter-spacing:-0.145px;">selection</span>
<span style="left:219.60px;top:323.00px;font-size:11px;color:#3c3c3c;font-weight:bold;letter-spacing:0.101px;">Result:</span>
<span style="left:214.05px;top:347.00px;font-size:11px;color:#6a6a6a;letter-spacing:0.127px;">Type</span>
<span style="left:288.05px;top:347.00px;font-size:11px;color:#6a6a6a;letter-spacing:-0.169px;">Tech. Name</span>
<span style="left:410.05px;top:347.00px;font-size:11px;color:#6a6a6a;letter-spacing:-0.259px;">Description</span>
<span style="left:584.95px;top:347.00px;font-size:11px;color:#6a6a6a;letter-spacing:0.355px;">V...</span>
<span style="left:608.55px;top:347.00px;font-size:11px;color:#6a6a6a;letter-spacing:0.020px;">Parent entity</span>
<span style="left:683.80px;top:347.00px;font-size:11px;color:#6a6a6a;letter-spacing:-0.045px;">Last Change...</span>
<span style="left:758.95px;top:347.00px;font-size:11px;color:#6a6a6a;letter-spacing:-0.014px;">Change ...</span>
<span style="left:813.65px;top:347.00px;font-size:11px;color:#6a6a6a;letter-spacing:0.569px;">UID</span>
<span style="left:1009.75px;top:347.00px;font-size:11px;color:#6a6a6a;letter-spacing:-0.073px;">Matches</span>
<span style="left:249.65px;top:370.00px;font-size:11px;color:#3a3a3a;letter-spacing:0.287px;">REP</span>
<span style="left:289.00px;top:370.00px;font-size:11px;color:#3a3a3a;letter-spacing:0.116px;">/IMO/V_SD40_Q0001</span>
<span style="left:411.20px;top:370.00px;font-size:11px;color:#3a3a3a;letter-spacing:-0.173px;">SD: </span>
<span style="left:431.15px;top:370.00px;font-size:11px;color:#3a3a3a;letter-spacing:-0.294px;">Condition </span>
<span style="left:478.32px;top:370.00px;font-size:11px;color:#3a3a3a;letter-spacing:-0.173px;">Value </span>
<span style="left:506.71px;top:370.00px;font-size:11px;color:#3a3a3a;letter-spacing:-0.173px;">per </span>
<span style="left:527.15px;top:370.00px;font-size:11px;color:#3a3a3a;letter-spacing:-0.127px;">Custome...</span>
<span style="left:585.70px;top:370.00px;font-size:11px;color:#3a3a3a;letter-spacing:0.156px;">7.x</span>
<span style="left:610.50px;top:370.00px;font-size:11px;color:#3a3a3a;letter-spacing:0.077px;">/IMO/V_SD40</span>
<span style="left:684.85px;top:370.00px;font-size:11px;color:#3a3a3a;letter-spacing:-0.378px;">SAP</span>
<span style="left:760.95px;top:370.00px;font-size:11px;color:#3a3a3a;letter-spacing:-0.010px;">18.12.2...</span>
<span style="left:815.25px;top:370.00px;font-size:11px;color:#3a3a3a;letter-spacing:-0.138px;">33D5WAB58LLAM8WQHQC83QHI0</span>
<span style="left:1049.95px;top:370.00px;font-size:11px;color:#3a3a3a;">1</span>
<span style="left:268.45px;top:392.00px;font-size:11px;color:#3a3a3a;letter-spacing:0.333px;">...</span>
<span style="left:288.35px;top:392.00px;font-size:11px;color:#3a3a3a;letter-spacing:-0.056px;">0SALES_UNIT</span>
<span style="left:410.88px;top:392.00px;font-size:11px;color:#3a3a3a;letter-spacing:-0.251px;">Sales </span>
<span style="left:438.79px;top:392.00px;font-size:11px;color:#3a3a3a;letter-spacing:-0.251px;">Unit</span>
<span style="left:586.05px;top:392.00px;font-size:11px;color:#3a3a3a;">-</span>
<span style="left:609.85px;top:392.00px;font-size:11px;color:#3a3a3a;letter-spacing:-0.202px;">0UNIT</span>
<span style="left:684.55px;top:392.00px;font-size:11px;color:#3a3a3a;letter-spacing:0.018px;">MHARING</span>
<span style="left:760.95px;top:392.00px;font-size:11px;color:#3a3a3a;letter-spacing:-0.010px;">18.12.2...</span>
<span style="left:1048.85px;top:392.00px;font-size:11px;color:#3a3a3a;">0</span>
<span style="left:249.65px;top:414.00px;font-size:11px;color:#3a3a3a;letter-spacing:0.287px;">REP</span>
<span style="left:289.00px;top:414.00px;font-size:11px;color:#3a3a3a;letter-spacing:0.092px;">/IMO/V_SD440_Q0001</span>
<span style="left:411.25px;top:414.00px;font-size:11px;color:#3a3a3a;letter-spacing:-0.232px;">Condition </span>
<span style="left:459.45px;top:414.00px;font-size:11px;color:#3a3a3a;letter-spacing:-0.342px;">Amount </span>
<span style="left:499.80px;top:414.00px;font-size:11px;color:#3a3a3a;letter-spacing:-0.370px;">(Sales </span>
<span style="left:530.16px;top:414.00px;font-size:11px;color:#3a3a3a;letter-spacing:-0.177px;">Order </span>
<span style="left:561.49px;top:414.00px;font-size:11px;color:#3a3a3a;letter-spacing:-0.177px;">D...</span>
<span style="left:585.70px;top:414.00px;font-size:11px;color:#3a3a3a;letter-spacing:0.156px;">7.x</span>
<span style="left:610.50px;top:414.00px;font-size:11px;color:#3a3a3a;letter-spacing:0.235px;">/IMO/V_SD...</span>
<span style="left:684.85px;top:414.00px;font-size:11px;color:#3a3a3a;letter-spacing:-0.378px;">SAP</span>
<span style="left:760.95px;top:414.00px;font-size:11px;color:#3a3a3a;letter-spacing:-0.010px;">18.12.2...</span>
<span style="left:815.35px;top:414.00px;font-size:11px;color:#3a3a3a;letter-spacing:-0.284px;">00O2TL85VOENU96NVO3P6Q5HV</span>
<span style="left:1049.95px;top:414.00px;font-size:11px;color:#3a3a3a;">1</span>
<span style="left:268.45px;top:436.00px;font-size:11px;color:#3a3a3a;letter-spacing:0.333px;">...</span>
<span style="left:288.35px;top:436.00px;font-size:11px;color:#3a3a3a;letter-spacing:-0.056px;">0SALES_UNIT</span>
<span style="left:410.88px;top:436.00px;font-size:11px;color:#3a3a3a;letter-spacing:-0.251px;">Sales </span>
<span style="left:438.79px;top:436.00px;font-size:11px;color:#3a3a3a;letter-spacing:-0.251px;">Unit</span>
<span style="left:586.05px;top:436.00px;font-size:11px;color:#3a3a3a;">-</span>
<span style="left:609.85px;top:436.00px;font-size:11px;color:#3a3a3a;letter-spacing:-0.202px;">0UNIT</span>
<span style="left:684.55px;top:436.00px;font-size:11px;color:#3a3a3a;letter-spacing:0.018px;">MHARING</span>
<span style="left:760.95px;top:436.00px;font-size:11px;color:#3a3a3a;letter-spacing:-0.010px;">18.12.2...</span>
<span style="left:1048.85px;top:436.00px;font-size:11px;color:#3a3a3a;">0</span>
</div></body></html>
